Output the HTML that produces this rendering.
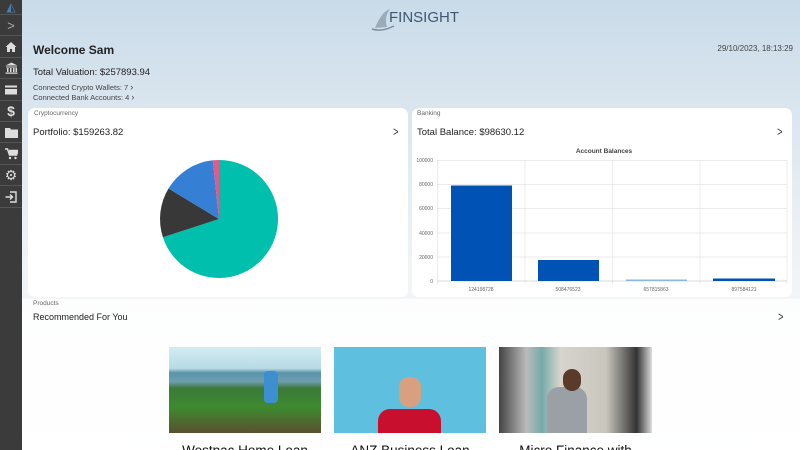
<!DOCTYPE html>
<html style="width:800px;height:450px;overflow:hidden"><head><meta charset="utf-8"><style>
*{margin:0;padding:0;box-sizing:border-box}
body{width:800px;height:450px;overflow:hidden;font-family:"Liberation Sans",sans-serif;color:#222;position:relative;background:linear-gradient(180deg,#c9dbe9 0%,#dbe6ef 25%,#eef2f5 55%,#f7f8f9 75%,#fafafa 100%)}
.side{position:absolute;left:0;top:0;width:22px;height:450px;background:#3b3b3b}
.side div{position:absolute;left:0;width:22px;height:21px;border-bottom:1px solid #555;display:flex;align-items:center;justify-content:center;color:#ddd;font-size:12px}
.abs{position:absolute}
.card{position:absolute;background:#fff;border-radius:7px}
.small{font-size:7px;color:#666}
.chev{position:absolute;font-size:13px;color:#333;transform:scaleX(.7)}
</style></head><body>
<div class="side">
<div style="top:0;height:15px;color:#4a7fb0">◭</div>
<div style="top:15px;font-size:13px;color:#aaa">&gt;</div>
<div style="top:37px"><svg width="12" height="12" viewBox="0 0 12 12"><path d="M6 1L0.5 6H2v5h3V8h2v3h3V6h1.5z" fill="#ddd"/></svg></div>
<div style="top:58px"><svg width="13" height="12" viewBox="0 0 13 12"><path d="M6.5 0.5L0.5 3.5h12zM1 4.5h11v1H1zM2 6h1.5v4H2zM5 6h1.5v4H5zM8 6h1.5v4H8zM10.5 6H12v4h-1.5zM0.5 10.5h12v1.2H0.5z" fill="#ddd"/></svg></div>
<div style="top:80px"><svg width="12" height="10" viewBox="0 0 12 10"><rect x="0" y="0.5" width="12" height="9" fill="#ddd"/><rect x="0" y="2.5" width="12" height="1.5" fill="#3b3b3b"/></svg></div>
<div style="top:101px;font-size:14px;font-weight:bold">$</div>
<div style="top:122px"><svg width="13" height="11" viewBox="0 0 13 11"><path d="M0 1h5l1 1.5h7V11H0z" fill="#ddd"/></svg></div>
<div style="top:144px"><svg width="13" height="12" viewBox="0 0 13 12"><path d="M0 1h2.5l2 6h7l1.5-4.5H4" fill="none" stroke="#ddd" stroke-width="1.5"/><rect x="4" y="3" width="8" height="4" fill="#ddd"/><circle cx="5" cy="10" r="1.2" fill="#ddd"/><circle cx="10.5" cy="10" r="1.2" fill="#ddd"/></svg></div>
<div style="top:165px;font-size:14px">⚙</div>
<div style="top:187px"><svg width="12" height="12" viewBox="0 0 12 12"><path d="M5 1h6v10H5" fill="none" stroke="#ddd" stroke-width="1.4"/><path d="M0.5 6h7M5 3.5L7.5 6 5 8.5" fill="none" stroke="#ddd" stroke-width="1.4"/></svg></div>
</div>

<div class="abs" style="left:370px;top:6px;width:85px;height:26px">
<svg width="26" height="26" viewBox="0 0 26 26" style="position:absolute;left:0;top:0"><path d="M5 22C8 15 12 6 20 3 16 8 15 15 17 21z" fill="#9aabb9"/><path d="M2 23c6 2 14 1 22-3" stroke="#7d8ea0" stroke-width="1.5" fill="none"/></svg>
<span style="position:absolute;left:19px;top:3px;font-size:15px;color:#3d5870;letter-spacing:0">FINSIGHT</span></div>

<div class="abs" style="left:33px;top:43px;font-size:12px;font-weight:bold;color:#222">Welcome Sam</div>
<div class="abs" style="right:7px;top:44px;font-size:8px;color:#444">29/10/2023, 18:13:29</div>
<div class="abs" style="left:33px;top:67px;font-size:9.5px;color:#222">Total Valuation: $257893.94</div>
<div class="abs" style="left:33px;top:82px;font-size:7.5px;color:#444">Connected Crypto Wallets: 7 <span style="font-size:9px">›</span></div>
<div class="abs" style="left:33px;top:92px;font-size:7.5px;color:#444">Connected Bank Accounts: 4 <span style="font-size:9px">›</span></div>

<div class="card" style="left:28px;top:108px;width:380px;height:189px">
<div class="small abs" style="left:6px;top:2px;font-size:6.5px">Cryptocurrency</div>
<div class="abs" style="left:5px;top:19px;font-size:9.5px">Portfolio: $159263.82</div>
<div class="chev" style="right:8px;top:16px">&gt;</div>
<svg class="abs" style="left:0;top:0" width="380" height="189" viewBox="28 108 380 189">
<path d="M219 219L219 160A59 59 0 1 1 162.9 237.2z" fill="#00bfad"/>
<path d="M219 219L162.9 237.2A59 59 0 0 1 168.5 188.5z" fill="#383838"/>
<path d="M219 219L168.5 188.5A59 59 0 0 1 212.8 160.3z" fill="#3580d4"/>
<path d="M219 219L212.8 160.3A59 59 0 0 1 219 160z" fill="#e05a8a"/>
</svg>
</div>

<div class="card" style="left:412px;top:108px;width:380px;height:189px">
<div class="small abs" style="left:5px;top:2px;font-size:6.5px">Banking</div>
<div class="abs" style="left:5px;top:19px;font-size:9.5px">Total Balance: $98630.12</div>
<div class="chev" style="right:8px;top:16px">&gt;</div>
<svg class="abs" style="left:0;top:0" width="380" height="189" viewBox="412 108 380 189" font-family="Liberation Sans" font-size="5" fill="#666">
<text x="604" y="153" font-size="6.5" font-weight="bold" fill="#444" text-anchor="middle">Account Balances</text>
<g stroke="#e4e4e4" stroke-width="0.7">
<line x1="437" y1="160.5" x2="787" y2="160.5"/><line x1="437" y1="184.5" x2="787" y2="184.5"/><line x1="437" y1="208.5" x2="787" y2="208.5"/><line x1="437" y1="233" x2="787" y2="233"/><line x1="437" y1="257" x2="787" y2="257"/>
<line x1="437.5" y1="160" x2="437.5" y2="284"/><line x1="525" y1="160" x2="525" y2="284"/><line x1="612.5" y1="160" x2="612.5" y2="284"/><line x1="700" y1="160" x2="700" y2="284"/><line x1="787" y1="160" x2="787" y2="284"/>
</g>
<line x1="437" y1="281" x2="787" y2="281" stroke="#ccc" stroke-width="0.8"/>
<g text-anchor="end"><text x="433" y="162">100000</text><text x="433" y="186">80000</text><text x="433" y="210">60000</text><text x="433" y="235">40000</text><text x="433" y="259">20000</text><text x="433" y="283">0</text></g>
<rect x="451" y="185.5" width="61" height="95.5" fill="#0052b4"/>
<rect x="538" y="260" width="61" height="21" fill="#0052b4"/>
<rect x="626" y="279.5" width="61" height="1.5" fill="#8fb6de"/>
<rect x="713" y="278.5" width="62" height="2.5" fill="#0052b4"/>
<g text-anchor="middle"><text x="481" y="291">124198728</text><text x="568" y="291">508476523</text><text x="656" y="291">657815863</text><text x="744" y="291">897584121</text></g>
</svg>
</div>

<div class="abs" style="left:22px;top:299px;width:778px;height:151px;background:linear-gradient(180deg,rgba(255,255,255,.8),rgba(255,255,255,.95))"></div>
<div class="small abs" style="left:33px;top:300px;font-size:6.5px">Products</div>
<div class="abs" style="left:33px;top:312px;font-size:9px">Recommended For You</div>
<div class="chev" style="right:15px;top:309px">&gt;</div>

<div class="abs" style="left:169px;top:347px;width:152px;height:86px;background:linear-gradient(180deg,#d4ecf2 0%,#b7dae6 25%,#5a93a8 30%,#6f9fb0 40%,#3b7a3a 48%,#3d8a2e 70%,#5a5030 100%)"><div class="abs" style="left:95px;top:24px;width:14px;height:32px;background:#3e8fd0;border-radius:4px"></div></div>
<div class="abs" style="left:334px;top:347px;width:152px;height:86px;background:#5ec0de"><div class="abs" style="left:44px;top:62px;width:63px;height:24px;background:#c8102e;border-radius:12px 12px 0 0"></div><div class="abs" style="left:65px;top:30px;width:22px;height:30px;background:#d9a080;border-radius:10px"></div></div>
<div class="abs" style="left:499px;top:347px;width:153px;height:86px;background:linear-gradient(90deg,#444 0%,#bbb 18%,#7aa 28%,#d6d4cc 40%,#c9c6be 70%,#333 90%,#ddd 100%)"><div class="abs" style="left:48px;top:40px;width:40px;height:46px;background:#9aa0a5;border-radius:12px 12px 0 0"></div><div class="abs" style="left:64px;top:22px;width:18px;height:22px;background:#5a3b2a;border-radius:9px"></div></div>

<div class="abs" style="left:169px;top:443px;width:152px;text-align:center;font-size:13.5px;color:#111;white-space:nowrap">Westpac Home Loan</div>
<div class="abs" style="left:334px;top:443px;width:152px;text-align:center;font-size:13.5px;color:#111;white-space:nowrap">ANZ Business Loan</div>
<div class="abs" style="left:499px;top:443px;width:153px;text-align:center;font-size:13.5px;color:#111;white-space:nowrap">Micro Finance with</div>
</body></html>
